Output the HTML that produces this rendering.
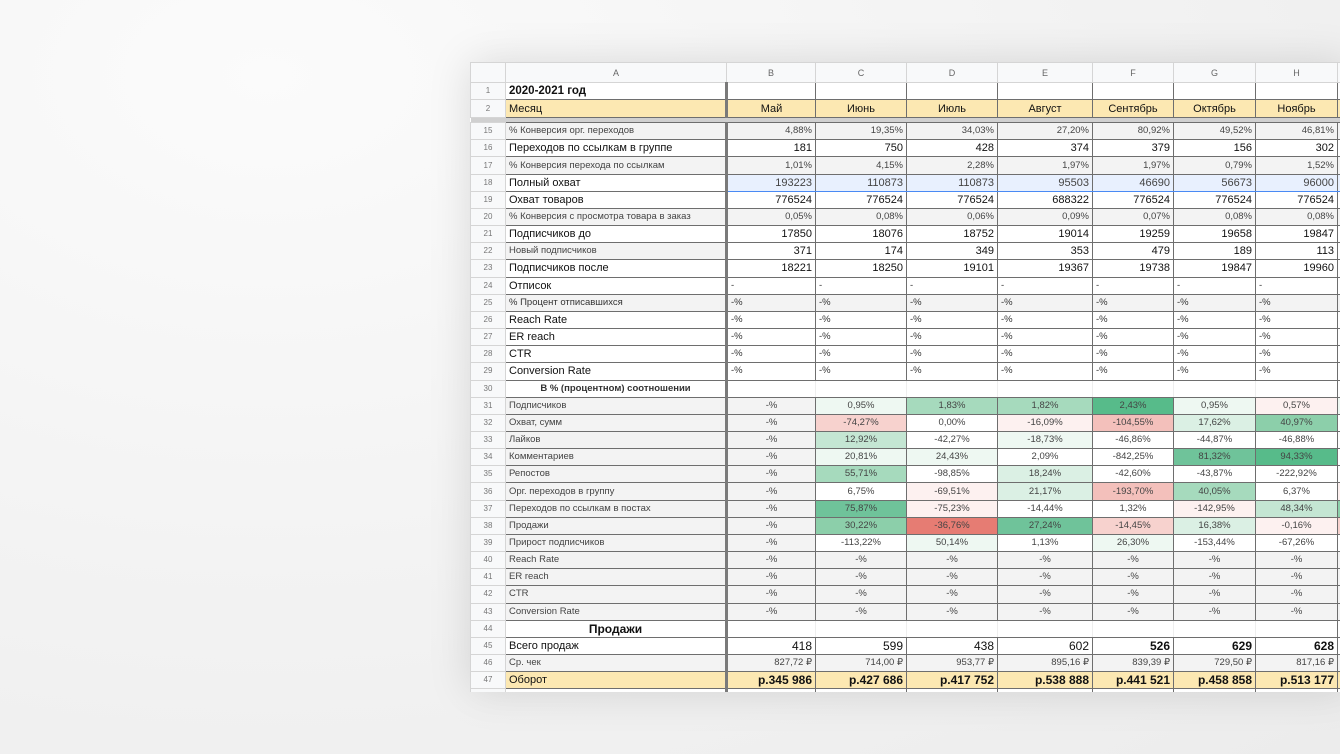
<!DOCTYPE html>
<html><head><meta charset="utf-8"><style>
html,body{margin:0;padding:0}
body{width:1340px;height:754px;overflow:hidden;background:radial-gradient(ellipse at 20% 10%,#fbfbfb 0%,#f3f3f3 50%,#ececec 100%);font-family:"Liberation Sans",Arial,sans-serif;position:relative}
#sheet{position:absolute;left:470px;top:62px;width:880px;height:630px;background:#fff;overflow:hidden;box-shadow:0 0 40px rgba(0,0,0,.13)}
table{border-collapse:collapse;table-layout:fixed;position:absolute;left:0;top:0;width:908px}
td{border:1px solid #6e6e6e;padding:0 3px;white-space:nowrap;overflow:hidden;font-size:11px;color:#111;line-height:14px}
tr{height:17.16px}
td.n{background:#f8f9fa !important;color:#777 !important;font-size:8px !important;text-align:center !important;border:1px solid #d5d5d5;padding:0}
tr.h{height:20px}
tr.h td{background:#f8f9fa;color:#666;font-size:9px;text-align:center;border:1px solid #d5d5d5}
td.A{border-right:3px solid #7a7a7a}
.s{font-size:9.5px;color:#444}
.g{background:#f3f3f3}
.r{text-align:right}
.c{text-align:center}
.b{font-weight:bold}
.y td{background:#fce8b2}
.sel td{background:#e8f0fe;border-top:1px solid #4a8af4;border-bottom:1px solid #4a8af4;color:#444}
.sel td.n{background:#e8eaed;border-top:1px solid #d5d5d5;border-bottom:1px solid #d5d5d5}
.sel td.A{background:#fff;color:#111;border-top:1px solid #6e6e6e;border-bottom:1px solid #6e6e6e}
tr.fz{height:4px}
.fz td{height:4px;background:#d0d0d0;border:0;padding:0;font-size:0;line-height:0}
.pc td{font-size:9.5px;color:#444;text-align:center}
.pc td.A{text-align:left}
.pc td.B{background:#f3f3f3}
.w{background:#fff}
.l1{background:#eef8f2}.l2{background:#dbf0e4}.l3{background:#c4e6d3}.l4{background:#a6dabd}.l5{background:#8ccfaa}.l6{background:#6fc39a}.l7{background:#57bb8a}
.p1{background:#fdf1f0}.p2{background:#f7d2ce}.p3{background:#f3c0bb}.p4{background:#e67c73}
.d td{font-size:9.5px;color:#333}
</style></head><body>
<div id="sheet">
<table>
<colgroup><col style="width:35px"><col style="width:221px"><col style="width:89px"><col style="width:91px"><col style="width:91px"><col style="width:95px"><col style="width:81px"><col style="width:82px"><col style="width:82px"><col style="width:41px"></colgroup>
<tr class="h"><td></td><td class="A">A</td><td>B</td><td>C</td><td>D</td><td>E</td><td>F</td><td>G</td><td>H</td><td></td></tr>
<tr><td class="n">1</td><td class="A b" style="font-size:11.5px">2020-2021 год</td><td></td><td></td><td></td><td></td><td></td><td></td><td></td><td></td></tr>
<tr class="y" style="height:18px"><td class="n">2</td><td class="A">Месяц</td><td class="c">Май</td><td class="c">Июнь</td><td class="c">Июль</td><td class="c">Август</td><td class="c">Сентябрь</td><td class="c">Октябрь</td><td class="c">Ноябрь</td><td></td></tr>
<tr class="fz"><td></td><td></td><td></td><td></td><td></td><td></td><td></td><td></td><td></td><td></td></tr>
<tr><td class="n">15</td><td class="A s g">% Конверсия орг. переходов</td><td class="r s g">4,88%</td><td class="r s g">19,35%</td><td class="r s g">34,03%</td><td class="r s g">27,20%</td><td class="r s g">80,92%</td><td class="r s g">49,52%</td><td class="r s g">46,81%</td><td class="g"></td></tr>
<tr><td class="n">16</td><td class="A">Переходов по ссылкам в группе</td><td class="r">181</td><td class="r">750</td><td class="r">428</td><td class="r">374</td><td class="r">379</td><td class="r">156</td><td class="r">302</td><td></td></tr>
<tr><td class="n">17</td><td class="A s g">% Конверсия перехода по ссылкам</td><td class="r s g">1,01%</td><td class="r s g">4,15%</td><td class="r s g">2,28%</td><td class="r s g">1,97%</td><td class="r s g">1,97%</td><td class="r s g">0,79%</td><td class="r s g">1,52%</td><td class="g"></td></tr>
<tr class="sel"><td class="n">18</td><td class="A">Полный охват</td><td class="r">193223</td><td class="r">110873</td><td class="r">110873</td><td class="r">95503</td><td class="r">46690</td><td class="r">56673</td><td class="r">96000</td><td></td></tr>
<tr><td class="n">19</td><td class="A">Охват товаров</td><td class="r">776524</td><td class="r">776524</td><td class="r">776524</td><td class="r">688322</td><td class="r">776524</td><td class="r">776524</td><td class="r">776524</td><td></td></tr>
<tr><td class="n">20</td><td class="A s g">% Конверсия с просмотра товара в заказ</td><td class="r s g">0,05%</td><td class="r s g">0,08%</td><td class="r s g">0,06%</td><td class="r s g">0,09%</td><td class="r s g">0,07%</td><td class="r s g">0,08%</td><td class="r s g">0,08%</td><td class="g"></td></tr>
<tr><td class="n">21</td><td class="A">Подписчиков до</td><td class="r">17850</td><td class="r">18076</td><td class="r">18752</td><td class="r">19014</td><td class="r">19259</td><td class="r">19658</td><td class="r">19847</td><td></td></tr>
<tr><td class="n">22</td><td class="A s g">Новый подписчиков</td><td class="r">371</td><td class="r">174</td><td class="r">349</td><td class="r">353</td><td class="r">479</td><td class="r">189</td><td class="r">113</td><td></td></tr>
<tr><td class="n">23</td><td class="A">Подписчиков после</td><td class="r">18221</td><td class="r">18250</td><td class="r">19101</td><td class="r">19367</td><td class="r">19738</td><td class="r">19847</td><td class="r">19960</td><td></td></tr>
<tr class="d"><td class="n">24</td><td class="A" style="font-size:11px;color:#111">Отписок</td><td>-</td><td>-</td><td>-</td><td>-</td><td>-</td><td>-</td><td>-</td><td></td></tr>
<tr class="d"><td class="n">25</td><td class="A s g">% Процент отписавшихся</td><td class="g">-%</td><td class="g">-%</td><td class="g">-%</td><td class="g">-%</td><td class="g">-%</td><td class="g">-%</td><td class="g">-%</td><td class="g"></td></tr>
<tr class="d"><td class="n">26</td><td class="A" style="font-size:11px;color:#111">Reach Rate</td><td>-%</td><td>-%</td><td>-%</td><td>-%</td><td>-%</td><td>-%</td><td>-%</td><td></td></tr>
<tr class="d"><td class="n">27</td><td class="A" style="font-size:11px;color:#111">ER reach</td><td>-%</td><td>-%</td><td>-%</td><td>-%</td><td>-%</td><td>-%</td><td>-%</td><td></td></tr>
<tr class="d"><td class="n">28</td><td class="A" style="font-size:11px;color:#111">CTR</td><td>-%</td><td>-%</td><td>-%</td><td>-%</td><td>-%</td><td>-%</td><td>-%</td><td></td></tr>
<tr class="d"><td class="n">29</td><td class="A" style="font-size:11px;color:#111">Conversion Rate</td><td>-%</td><td>-%</td><td>-%</td><td>-%</td><td>-%</td><td>-%</td><td>-%</td><td></td></tr>
<tr><td class="n">30</td><td class="A c b s" style="color:#333">В % (процентном) соотношении</td><td style="border-right-color:#eee"></td><td style="border-right-color:#eee"></td><td style="border-right-color:#eee"></td><td style="border-right-color:#eee"></td><td style="border-right-color:#eee"></td><td style="border-right-color:#eee"></td><td></td><td></td></tr>
<tr class="pc"><td class="n">31</td><td class="A g">Подписчиков</td><td class="B">-%</td><td class="l1">0,95%</td><td class="l4">1,83%</td><td class="l4">1,82%</td><td class="l7">2,43%</td><td class="l1">0,95%</td><td class="p1">0,57%</td><td class="l1"></td></tr>
<tr class="pc"><td class="n">32</td><td class="A g">Охват, сумм</td><td class="B">-%</td><td class="p2">-74,27%</td><td class="w">0,00%</td><td class="p1">-16,09%</td><td class="p3">-104,55%</td><td class="l2">17,62%</td><td class="l5">40,97%</td><td class="w"></td></tr>
<tr class="pc"><td class="n">33</td><td class="A g">Лайков</td><td class="B">-%</td><td class="l3">12,92%</td><td class="w">-42,27%</td><td class="l1">-18,73%</td><td class="w">-46,86%</td><td class="w">-44,87%</td><td class="w">-46,88%</td><td class="w"></td></tr>
<tr class="pc"><td class="n">34</td><td class="A g">Комментариев</td><td class="B">-%</td><td class="l1">20,81%</td><td class="l1">24,43%</td><td class="w">2,09%</td><td class="w">-842,25%</td><td class="l6">81,32%</td><td class="l7">94,33%</td><td class="w"></td></tr>
<tr class="pc"><td class="n">35</td><td class="A g">Репостов</td><td class="B">-%</td><td class="l4">55,71%</td><td class="w">-98,85%</td><td class="l2">18,24%</td><td class="w">-42,60%</td><td class="w">-43,87%</td><td class="w">-222,92%</td><td class="w"></td></tr>
<tr class="pc"><td class="n">36</td><td class="A g">Орг. переходов в группу</td><td class="B">-%</td><td class="w">6,75%</td><td class="p1">-69,51%</td><td class="l2">21,17%</td><td class="p3">-193,70%</td><td class="l4">40,05%</td><td class="w">6,37%</td><td class="p1"></td></tr>
<tr class="pc"><td class="n">37</td><td class="A g">Переходов по ссылкам в постах</td><td class="B">-%</td><td class="l6">75,87%</td><td class="p1">-75,23%</td><td class="w">-14,44%</td><td class="w">1,32%</td><td class="p1">-142,95%</td><td class="l3">48,34%</td><td class="l5"></td></tr>
<tr class="pc"><td class="n">38</td><td class="A g">Продажи</td><td class="B">-%</td><td class="l5">30,22%</td><td class="p4">-36,76%</td><td class="l6">27,24%</td><td class="p2">-14,45%</td><td class="l2">16,38%</td><td class="p1">-0,16%</td><td class="p2"></td></tr>
<tr class="pc"><td class="n">39</td><td class="A g">Прирост подписчиков</td><td class="B">-%</td><td class="w">-113,22%</td><td class="l1">50,14%</td><td class="w">1,13%</td><td class="l1">26,30%</td><td class="w">-153,44%</td><td class="w">-67,26%</td><td class="w"></td></tr>
<tr class="pc"><td class="n">40</td><td class="A g">Reach Rate</td><td class="B">-%</td><td class="g">-%</td><td class="g">-%</td><td class="g">-%</td><td class="g">-%</td><td class="g">-%</td><td class="g">-%</td><td class="g"></td></tr>
<tr class="pc"><td class="n">41</td><td class="A g">ER reach</td><td class="B">-%</td><td class="g">-%</td><td class="g">-%</td><td class="g">-%</td><td class="g">-%</td><td class="g">-%</td><td class="g">-%</td><td class="g"></td></tr>
<tr class="pc"><td class="n">42</td><td class="A g">CTR</td><td class="B">-%</td><td class="g">-%</td><td class="g">-%</td><td class="g">-%</td><td class="g">-%</td><td class="g">-%</td><td class="g">-%</td><td class="g"></td></tr>
<tr class="pc"><td class="n">43</td><td class="A g">Conversion Rate</td><td class="B">-%</td><td class="g">-%</td><td class="g">-%</td><td class="g">-%</td><td class="g">-%</td><td class="g">-%</td><td class="g">-%</td><td class="g"></td></tr>
<tr><td class="n">44</td><td class="A c b" style="font-size:12px">Продажи</td><td style="border-right-color:#eee"></td><td style="border-right-color:#eee"></td><td style="border-right-color:#eee"></td><td style="border-right-color:#eee"></td><td style="border-right-color:#eee"></td><td style="border-right-color:#eee"></td><td></td><td></td></tr>
<tr><td class="n">45</td><td class="A">Всего продаж</td><td class="r" style="font-size:12px">418</td><td class="r" style="font-size:12px">599</td><td class="r" style="font-size:12px">438</td><td class="r" style="font-size:12px">602</td><td class="r b" style="font-size:12px">526</td><td class="r b" style="font-size:12px">629</td><td class="r b" style="font-size:12px">628</td><td></td></tr>
<tr><td class="n">46</td><td class="A s g">Ср. чек</td><td class="r s g">827,72 ₽</td><td class="r s g">714,00 ₽</td><td class="r s g">953,77 ₽</td><td class="r s g">895,16 ₽</td><td class="r s g">839,39 ₽</td><td class="r s g">729,50 ₽</td><td class="r s g">817,16 ₽</td><td class="g"></td></tr>
<tr class="y"><td class="n">47</td><td class="A">Оборот</td><td class="r b" style="font-size:12px">р.345 986</td><td class="r b" style="font-size:12px">р.427 686</td><td class="r b" style="font-size:12px">р.417 752</td><td class="r b" style="font-size:12px">р.538 888</td><td class="r b" style="font-size:12px">р.441 521</td><td class="r b" style="font-size:12px">р.458 858</td><td class="r b" style="font-size:12px">р.513 177</td><td></td></tr>
<tr><td class="n"></td><td class="A"></td><td></td><td></td><td></td><td></td><td></td><td></td><td></td><td></td></tr>
</table>
</div>
</body></html>
